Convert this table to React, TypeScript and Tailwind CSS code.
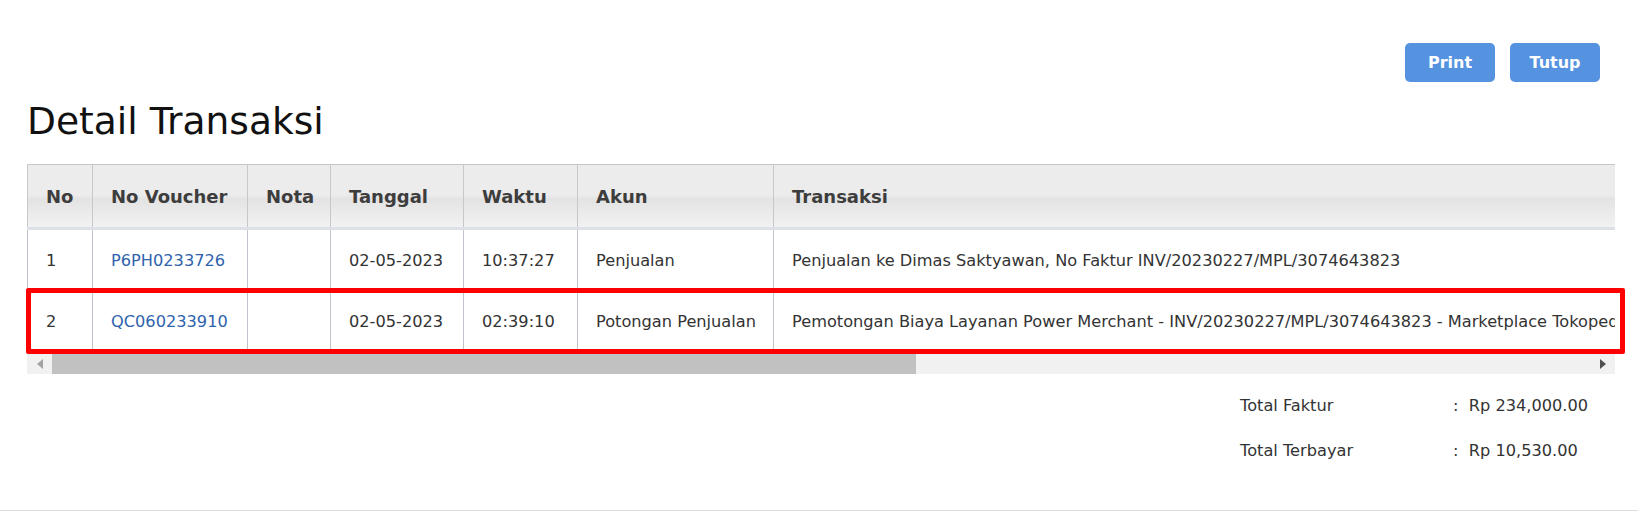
import React from 'react';

const rows = [
  {
    no: 1,
    voucher: 'P6PH0233726',
    nota: '',
    tanggal: '02-05-2023',
    waktu: '10:37:27',
    akun: 'Penjualan',
    transaksi: 'Penjualan ke Dimas Saktyawan, No Faktur INV/20230227/MPL/3074643823',
  },
  {
    no: 2,
    voucher: 'QC060233910',
    nota: '',
    tanggal: '02-05-2023',
    waktu: '02:39:10',
    akun: 'Potongan Penjualan',
    transaksi:
      'Pemotongan Biaya Layanan Power Merchant - INV/20230227/MPL/3074643823 - Marketplace Tokopedia',
  },
];

const headers = ['No', 'No Voucher', 'Nota', 'Tanggal', 'Waktu', 'Akun', 'Transaksi'];
const colWidths = ['w-[65px]', 'w-[155px]', 'w-[83px]', 'w-[133px]', 'w-[114px]', 'w-[196px]', 'w-[2120px]'];

export default function App() {
  return (
    <div className="w-[1638px] h-[511px] bg-white overflow-hidden border-b border-[#dddddd] font-['DejaVu_Sans',sans-serif] text-[16.2px] text-[#333]">
      {/* Actions */}
      <div className="flex justify-end gap-[15px] pt-[43px] pr-[38px]">
        <button className="w-[90px] h-[39px] rounded-[5px] bg-[#5592e0] text-white font-bold text-[16px]">
          Print
        </button>
        <button className="w-[90px] h-[39px] rounded-[5px] bg-[#5592e0] text-white font-bold text-[16px]">
          Tutup
        </button>
      </div>

      <h1 className="mt-[18px] ml-[27px] text-[37.6px] leading-[43px] text-[#111]">Detail Transaksi</h1>

      {/* Table */}
      <div className="relative mt-[21px] ml-[27px] w-[1588px]">
        <div className="overflow-hidden">
          <table className="table-fixed border-collapse w-[2866px]">
            <colgroup>
              {colWidths.map((w, i) => (
                <col key={i} className={w} />
              ))}
            </colgroup>
            <thead>
              <tr className="h-[64px] bg-[linear-gradient(to_bottom,#ececec_0%,#ececec_47%,#e3e3e3_53%,#f3f3f3_100%)]">
                {headers.map((h) => (
                  <th
                    key={h}
                    className="border border-[#c6c8cc] border-b-[3px] border-b-[#dde0e6] px-[18px] text-left font-bold text-[18px] text-[#3d3d3d]"
                  >
                    {h}
                  </th>
                ))}
              </tr>
            </thead>
            <tbody>
              {rows.map((r) => (
                <tr key={r.no} className="h-[61px]">
                  <td className="border border-[#bfc4cc] px-[18px] pt-[4px]">{r.no}</td>
                  <td className="border border-[#bfc4cc] px-[18px] pt-[4px] text-[#2f63ad]">{r.voucher}</td>
                  <td className="border border-[#bfc4cc] px-[18px] pt-[4px]">{r.nota}</td>
                  <td className="border border-[#bfc4cc] px-[18px] pt-[4px]">{r.tanggal}</td>
                  <td className="border border-[#bfc4cc] px-[18px] pt-[4px]">{r.waktu}</td>
                  <td className="border border-[#bfc4cc] px-[18px] pt-[4px] whitespace-nowrap">{r.akun}</td>
                  <td className="border border-[#bfc4cc] px-[18px] pt-[4px] whitespace-nowrap">{r.transaksi}</td>
                </tr>
              ))}
            </tbody>
          </table>
        </div>

        {/* Highlight */}
        <div className="absolute left-[-1px] top-[124px] w-[1599px] h-[66px] border-[5px] border-[#ff0000] rounded-[2px]" />

        {/* Scrollbar */}
        <div className="mt-[2px] h-[21px] flex bg-[#f1f1f1]">
          <div className="w-[25px] flex items-center justify-center">
            <svg width="6" height="10" viewBox="0 0 6 10">
              <path d="M6 0 L0 5 L6 10 Z" fill="#a3a3a3" />
            </svg>
          </div>
          <div className="w-[864px] bg-[#c1c1c1]" />
          <div className="flex-1" />
          <div className="w-[25px] flex items-center justify-center">
            <svg width="6" height="10" viewBox="0 0 6 10">
              <path d="M0 0 L6 5 L0 10 Z" fill="#505050" />
            </svg>
          </div>
        </div>
      </div>

      {/* Totals */}
      <div className="ml-[1240px] mt-[21px] grid grid-cols-[213px_auto] gap-y-[23px] leading-[22px]">
        <div>Total Faktur</div>
        <div>:&nbsp;&nbsp;Rp 234,000.00</div>
        <div>Total Terbayar</div>
        <div>:&nbsp;&nbsp;Rp 10,530.00</div>
      </div>
    </div>
  );
}
